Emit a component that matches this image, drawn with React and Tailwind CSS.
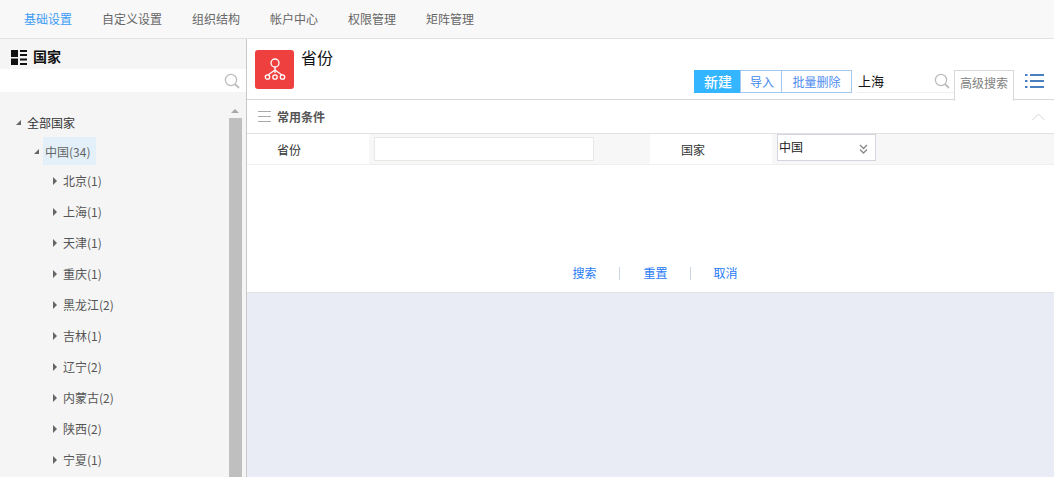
import React from "react";

const nav = ["基础设置", "自定义设置", "组织结构", "帐户中心", "权限管理", "矩阵管理"];
const navW = ["w-[78px]", "w-[90px]", "w-[78px]", "w-[78px]", "w-[78px]", "w-[78px]"];
const provinces = ["北京(1)", "上海(1)", "天津(1)", "重庆(1)", "黑龙江(2)", "吉林(1)", "辽宁(2)", "内蒙古(2)", "陕西(2)", "宁夏(1)"];

function Search({ className = "" }) {
  return (
    <svg width="16" height="16" viewBox="0 0 16 16" fill="none" stroke="#bdbdbd" className={className}>
      <circle cx="7" cy="7" r="5.6" strokeWidth="1.3" />
      <path d="M11 11l4 4" strokeWidth="1.8" />
    </svg>
  );
}

function Down({ mr }) {
  return <span className={`w-0 h-0 ${mr} border-l-[5px] border-l-transparent border-b-[5px] border-b-[#666]`} />;
}

function Right() {
  return <span className="w-0 h-0 mr-[6px] border-y-[4px] border-y-transparent border-l-[4px] border-l-[#666]" />;
}

export default function App() {
  return (
    <div className="w-[1054px] h-[477px] overflow-hidden flex flex-col bg-white text-[12px] font-['Noto_Sans_CJK_SC','Liberation_Sans',sans-serif]">
      <div className="h-[39px] shrink-0 flex items-center pl-[24px] bg-[#f8f8f8] border-b border-[#e2e2e2]">
        {nav.map((n, i) => (
          <span key={n} className={`${navW[i]} ${i === 0 ? "text-[#3d9bf5]" : "text-[#666]"}`}>{n}</span>
        ))}
      </div>
      <div className="flex-1 flex min-h-0">
        <div className="w-[247px] shrink-0 flex flex-col bg-[#f5f5f5] border-r border-[#c8c8c8]">
          <div className="h-[30px] shrink-0 flex items-center pl-[11px] gap-[6px] pt-[6px]">
            <svg width="16" height="15" viewBox="0 0 16 15" fill="#111">
              <rect x="0" y="0" width="7" height="7" />
              <rect x="0" y="8.5" width="7" height="6.5" />
              <rect x="9" y="0" width="7" height="2" />
              <rect x="9" y="4" width="7" height="2" />
              <rect x="9" y="8.5" width="7" height="2" />
              <rect x="9" y="13" width="7" height="2" />
            </svg>
            <span className="text-[14px] font-bold text-[#111] -mt-[2px]">国家</span>
          </div>
          <div className="h-[23px] shrink-0 bg-white flex items-center justify-end pr-[6px]">
            <Search />
          </div>
          <div className="flex-1 flex min-h-0 overflow-hidden pt-[11px]">
            <div className="flex-1 min-w-0 text-[#444]">
              <div className="h-[34px] pl-[16px] flex items-center pt-[5px]">
                <Down mr="mr-[6px]" />
                <span className="text-[#333]">全部国家</span>
              </div>
              <div className="h-[28px] pl-[34px] flex items-center">
                <Down mr="mr-[4px]" />
                <span className="h-[28px] w-[53px] flex items-center bg-[#e3f0fa] pl-[2px] pt-[1px] text-[#666]">中国(34)</span>
              </div>
              <div>
                {provinces.map((p) => (
                  <div key={p} className="h-[31px] pl-[53px] flex items-center text-[#555]">
                    <Right />
                    <span>{p}</span>
                  </div>
                ))}
              </div>
            </div>
            <div className="w-[14px] mr-[4px] shrink-0 flex flex-col items-center">
              <div className="h-[15px] shrink-0 flex items-center justify-center">
                <span className="w-0 h-0 border-x-[4px] border-x-transparent border-b-[4px] border-b-[#a8a8a8]" />
              </div>
              <div className="flex-1 w-[13px] bg-[#bfbfbf]" />
            </div>
          </div>
        </div>
        <div className="flex-1 min-w-0 flex flex-col">
          <div className="h-[61px] shrink-0 flex border-b border-[#d8d8d8] relative">
            <div className="flex pl-[8px] pt-[11px] gap-[7px]">
              <div className="w-[39px] h-[39px] rounded-[3px] bg-[#ef4040] flex items-center justify-center">
                <svg width="24" height="26" viewBox="0 0 24 26" fill="none" stroke="#fff" strokeWidth="1.3">
                  <circle cx="12" cy="6" r="4" />
                  <path d="M12 10v6M12 13l-7 5M12 13l7 5" />
                  <circle cx="4.5" cy="20" r="2.2" />
                  <circle cx="12" cy="20" r="2.2" />
                  <circle cx="19.5" cy="20" r="2.2" />
                </svg>
              </div>
              <span className="text-[16px] leading-[18px] text-[#111] -mt-[2px]">省份</span>
            </div>
            <div className="flex-1" />
            <div className="flex items-start pt-[31px]">
              <div className="flex h-[23px]">
                <span className="w-[46px] bg-[#33b5ff] text-white text-[14px] pl-[2px] flex items-center justify-center font-medium">新建</span>
                <span className="w-[42px] border border-[#a5c8f0] text-[#3f8cf0] pl-[2px] flex items-center justify-center">导入</span>
                <span className="w-[70px] border border-l-0 border-[#a5c8f0] text-[#4f8cf0] flex items-center justify-center">批量删除</span>
              </div>
              <div className="ml-[5px] w-[97px] h-[23px] border-b border-[#f0f0f0] flex items-center justify-between pr-[4px] text-[13px] text-[#111]">
                <span className="pl-[1px]">上海</span>
                <Search />
              </div>
              <div className="w-[60px] h-[31px] bg-white border border-b-0 border-[#d8d8d8] flex items-center justify-center text-[#808080] pb-[6px] relative z-10">高级搜索</div>
              <div className="w-[40px] flex justify-center pt-[4px]">
                <svg width="19" height="14" viewBox="0 0 19 14" fill="#4a80c0">
                  <rect x="0" y="0" width="2.5" height="2" />
                  <rect x="5" y="0" width="14" height="2" />
                  <rect x="0" y="6" width="2.5" height="2" />
                  <rect x="5" y="6" width="14" height="2" />
                  <rect x="0" y="12" width="2.5" height="2" />
                  <rect x="5" y="12" width="14" height="2" />
                </svg>
              </div>
            </div>
          </div>
          <div className="h-[34px] shrink-0 flex items-center border-b border-[#e2e2e2] pl-[11px] pr-[9px]">
            <svg width="13" height="11" viewBox="0 0 13 11" stroke="#aaa" strokeWidth="1">
              <path d="M0 .5h13M0 5.500h13M0 10.500h13" />
            </svg>
            <span className="ml-[6px] font-bold text-[#555]">常用条件</span>
            <div className="flex-1" />
            <svg width="13" height="8" viewBox="0 0 13 8" fill="none" stroke="#d5d5d5" strokeWidth="1">
              <path d="M.5 7L6.500 1l6 6" />
            </svg>
          </div>
          <div className="h-[31px] shrink-0 flex border-b border-[#efefef] bg-[#f7f7f7]">
            <div className="w-[122px] bg-white flex items-start pl-[30px] pt-[7px] text-[#333]">省份</div>
            <div className="w-[281px] pl-[5px]">
              <div className="w-[220px] h-[24px] mt-[3px] bg-white border border-[#e8e8e2]" />
            </div>
            <div className="w-[122px] bg-white pl-[31px] pt-[7px] text-[#333]">国家</div>
            <div className="pl-[5px] flex-1">
              <div className="w-[99px] h-[27px] border border-[#d3d6de] bg-white flex items-center justify-between pl-[1px] pr-[7px] text-[#222] pb-[2px]">
                <span>中国</span>
                <svg width="9" height="10" viewBox="0 0 9 10" fill="none" stroke="#888" strokeWidth="1.3" className="mt-[4px]">
                  <path d="M1 1l3.500 3.500L8 1M1 5.500L4.500 9 8 5.500" />
                </svg>
              </div>
            </div>
          </div>
          <div className="h-[128px] shrink-0 flex items-end justify-center border-b border-[#e2e2e2] pb-[10px] pl-[9px] text-[#1f7af5]">
            <span>搜索</span>
            <span className="w-[1px] h-[13px] bg-[#ccd5e2] mx-[23px] mb-[2px]" />
            <span>重置</span>
            <span className="w-[1px] h-[13px] bg-[#ccd5e2] ml-[22px] mr-[23px] mb-[2px]" />
            <span>取消</span>
          </div>
          <div className="flex-1 bg-[#e9ecf5]" />
        </div>
      </div>
    </div>
  );
}
